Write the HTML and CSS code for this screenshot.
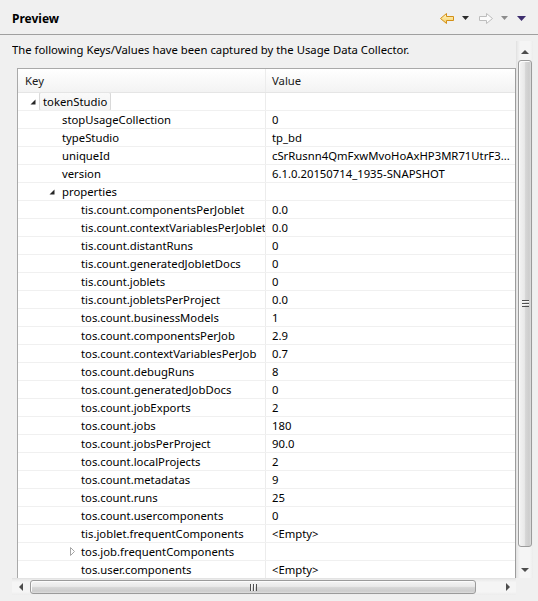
FILE: index.html
```html
<!DOCTYPE html>
<html lang="en">
<head>
    <meta charset="UTF-8">
    <title>Preview</title>
    <link rel="stylesheet" href="styles.css">
</head>
<body>

    <header class="view-header">
        <h2 class="view-title">Preview</h2>
        <div class="view-tools">
            <svg class="tool-arrow" width="16" height="13" viewBox="0 0 16 13">
                <defs>
                    <linearGradient id="backFill" x1="0" y1="0" x2="0" y2="1">
                        <stop offset="0" stop-color="#fff6c8"/>
                        <stop offset="1" stop-color="#f6cf63"/>
                    </linearGradient>
                </defs>
                <path d="M1.5 6.5 L7.5 1.5 L7.5 4.5 L14.5 4.5 L14.5 8.5 L7.5 8.5 L7.5 11.5 Z" fill="url(#backFill)" stroke="#d38f16" stroke-linejoin="round"/>
            </svg>
            <svg class="tool-drop" width="7" height="4" viewBox="0 0 7 4"><path d="M0 0 H7 L3.5 4 Z" fill="#2b2b2b"/></svg>
            <svg class="tool-arrow" width="16" height="13" viewBox="0 0 16 13">
                <path d="M14.5 6.5 L8.5 1.5 L8.5 4.5 L1.5 4.5 L1.5 8.5 L8.5 8.5 L8.5 11.5 Z" fill="#fbfbfb" stroke="#bdbdbd" stroke-linejoin="round"/>
            </svg>
            <svg class="tool-drop" width="7" height="4" viewBox="0 0 7 4"><path d="M0 0 H7 L3.5 4 Z" fill="#8c8c8c"/></svg>
            <svg class="tool-menu" width="9" height="5" viewBox="0 0 9 5"><path d="M0 0 H9 L4.5 5 Z" fill="#3d2d6e"/></svg>
        </div>
    </header>

    <div class="view-body">
        <div class="scroller">
            <div class="scroll-content">
                <p class="intro">The following Keys/Values have been captured by the Usage Data Collector.</p>

                <div class="tree-table">
                    <div class="tree-head">
                        <div class="key">Key</div>
                        <div class="val">Value</div>
                    </div>
                    <div id="tree-rows"></div>
                </div>
            </div>

            <div class="vbar">
                <div class="sb-btn btn-up"><span class="arr arr-up"></span></div>
                <div class="vthumb"><span class="grip"></span></div>
                <div class="sb-fill"></div>
                <div class="sb-btn btn-down"><span class="arr arr-down"></span></div>
            </div>

            <div class="hbar">
                <div class="sb-btn"><span class="arr arr-left"></span></div>
                <div class="hthumb"><span class="grip"></span></div>
                <div class="sb-fill"></div>
                <div class="sb-btn"><span class="arr arr-right"></span></div>
            </div>

            <div class="corner"></div>
        </div>
    </div>

    <script>
        // [level, key, value, twisty]  twisty: 'open' | 'closed' | ''
        const rows = [
            [0, 'tokenStudio', '', 'open'],
            [1, 'stopUsageCollection', '0', ''],
            [1, 'typeStudio', 'tp_bd', ''],
            [1, 'uniqueId', 'cSrRusnn4QmFxwMvoHoAxHP3MR71UtrF3...', ''],
            [1, 'version', '6.1.0.20150714_1935-SNAPSHOT', ''],
            [1, 'properties', '', 'open'],
            [2, 'tis.count.componentsPerJoblet', '0.0', ''],
            [2, 'tis.count.contextVariablesPerJoblet', '0.0', ''],
            [2, 'tis.count.distantRuns', '0', ''],
            [2, 'tis.count.generatedJobletDocs', '0', ''],
            [2, 'tis.count.joblets', '0', ''],
            [2, 'tis.count.jobletsPerProject', '0.0', ''],
            [2, 'tos.count.businessModels', '1', ''],
            [2, 'tos.count.componentsPerJob', '2.9', ''],
            [2, 'tos.count.contextVariablesPerJob', '0.7', ''],
            [2, 'tos.count.debugRuns', '8', ''],
            [2, 'tos.count.generatedJobDocs', '0', ''],
            [2, 'tos.count.jobExports', '2', ''],
            [2, 'tos.count.jobs', '180', ''],
            [2, 'tos.count.jobsPerProject', '90.0', ''],
            [2, 'tos.count.localProjects', '2', ''],
            [2, 'tos.count.metadatas', '9', ''],
            [2, 'tos.count.runs', '25', ''],
            [2, 'tos.count.usercomponents', '0', ''],
            [2, 'tis.joblet.frequentComponents', '<Empty>', ''],
            [2, 'tos.job.frequentComponents', '', 'closed'],
            [2, 'tos.user.components', '<Empty>', '']
        ];

        const openIcon = '<svg width="6" height="6" viewBox="0 0 6 6"><path d="M5.5 0.5 V5.5 H0.5 Z" fill="#262626"/></svg>';
        const closedIcon = '<svg width="5" height="9" viewBox="0 0 5 9"><path d="M0.5 0.5 L4.5 4.5 L0.5 8.5 Z" fill="#fff" stroke="#a6a6a6"/></svg>';

        const list = document.getElementById('tree-rows');
        rows.forEach((r, i) => {
            const row = document.createElement('div');
            row.className = 'tree-row lvl-' + r[0];

            const key = document.createElement('div');
            key.className = 'key';
            const twisty = document.createElement('span');
            twisty.className = 'twisty ' + r[3];
            if (r[3] === 'open') twisty.innerHTML = openIcon;
            if (r[3] === 'closed') twisty.innerHTML = closedIcon;
            const label = document.createElement('span');
            label.className = i === 0 ? 'label focused' : 'label';
            label.textContent = r[1];
            key.appendChild(twisty);
            key.appendChild(label);

            const val = document.createElement('div');
            val.className = 'val';
            val.textContent = r[2];

            row.appendChild(key);
            row.appendChild(val);
            list.appendChild(row);
        });
    </script>

</body>
</html>
```

FILE: styles.css
```css
/* General */
body {
    font-family: "Noto Sans", "Open Sans", sans-serif;
    font-size: 11.3px;
    color: #000;
    background: #f0f0f0;
    margin: 0;
    padding: 0;
}

/* View header */
.view-header {
    display: flex;
    align-items: center;
    height: 34px;
    padding: 0 12px;
    border-bottom: 1px solid #a0a0a0;
}

.view-title {
    margin: 0;
    font-size: 12px;
    font-weight: bold;
    flex: 1;
    padding-top: 3px;
}

.view-tools {
    display: flex;
    align-items: center;
    margin-left: -2px;
    padding-top: 2px;
}

.tool-arrow {
    margin-right: 7px;
}

.tool-drop {
    margin-right: 9px;
}

/* Body */
.view-body {
    padding: 6px 5px 0 12px;
}

.scroller {
    display: grid;
    grid-template-columns: 504px 17px;
    grid-template-rows: 537px 17px;
}

.scroll-content {
    overflow: hidden;
}

.intro {
    margin: 0 0 9px 0;
    line-height: 18px;
}

/* Tree table */
.tree-table {
    margin-left: 5px;
    border: 1px solid #a9a9a9;
    border-right-color: #9c9c9c;
    border-bottom: none;
    background: #fff;
}

.tree-head {
    display: flex;
    height: 23px;
    line-height: 23px;
    background: linear-gradient(#ffffff, #f3f3f3);
    border-bottom: 1px solid #e5e5e5;
    color: #1a1a1a;
}

.tree-head .key {
    padding-left: 7px;
}

.tree-row {
    display: flex;
    height: 17px;
    line-height: 17px;
    border-bottom: 1px solid #f0f0f0;
}

.key {
    box-sizing: border-box;
    width: 248px;
    flex: none;
    border-right: 1px solid #ececec;
    display: flex;
    align-items: center;
    white-space: nowrap;
    overflow: hidden;
}

.val {
    flex: 1;
    padding-left: 6px;
    white-space: nowrap;
    overflow: hidden;
}

.lvl-0 .key { padding-left: 10px; }
.lvl-1 .key { padding-left: 29px; }
.lvl-2 .key { padding-left: 48px; }

.twisty {
    width: 11px;
    height: 17px;
    flex: none;
    display: flex;
    align-items: center;
}

.twisty.open {
    padding-left: 2px;
    width: 9px;
}

.twisty.closed {
    padding-left: 4px;
    width: 7px;
}

.twisty svg {
    display: block;
}

.label {
    padding: 0 3px;
    border: 1px solid transparent;
    line-height: 17px;
}

.label.focused {
    border-color: #d9d9d9;
    border-radius: 2px;
    background: linear-gradient(#fafafa, #f2f2f2);
}

/* Scrollbars */
.vbar {
    display: flex;
    flex-direction: column;
    background: linear-gradient(to right, #e8e8e8, #f5f5f5 20%, #f5f5f5 80%, #ececec);
    border-left: 1px solid #e3e3e3;
    box-sizing: border-box;
}

.hbar {
    display: flex;
    background: linear-gradient(#e8e8e8, #f5f5f5 20%, #f5f5f5 80%, #ececec);
    border-top: 1px solid #e3e3e3;
}

.corner {
    background: #f0f0f0;
}

.sb-btn {
    flex: none;
    display: flex;
    align-items: center;
    justify-content: center;
}

.btn-up {
    height: 19px;
}

.btn-down {
    height: 20px;
}

.hbar .sb-btn {
    width: 17px;
}

.sb-fill {
    flex: 1;
}

.arr {
    width: 0;
    height: 0;
    border: 4px solid transparent;
}

.arr-up {
    border-bottom: 4px solid #4d4d4d;
    border-top-width: 0;
    margin-top: 2px;
}

.arr-down {
    border-top: 4px solid #4d4d4d;
    border-bottom-width: 0;
    margin-top: 4px;
}

.arr-left {
    border-right: 4px solid #4d4d4d;
    border-left-width: 0;
}

.arr-right {
    border-left: 4px solid #4d4d4d;
    border-right-width: 0;
}

.vthumb {
    height: 485px;
    margin: 0 1px;
    border: 1px solid #9b9b9b;
    border-radius: 3px;
    background: linear-gradient(to right, #f4f4f4, #e9e9e9 45%, #d6d6d6 55%, #cdcdcd 85%, #dedede);
    box-shadow: inset 1px 1px 0 #fbfbfb;
    display: flex;
    align-items: center;
    justify-content: center;
}

.hthumb {
    width: 444px;
    margin: 1px 0 1px 1px;
    border: 1px solid #9b9b9b;
    border-radius: 3px;
    background: linear-gradient(#f4f4f4, #e9e9e9 45%, #d6d6d6 55%, #cdcdcd 85%, #dedede);
    box-shadow: inset 1px 1px 0 #fbfbfb;
    display: flex;
    align-items: center;
    justify-content: center;
}

.vthumb .grip {
    width: 7px;
    height: 7px;
    background: repeating-linear-gradient(#4f4f4f 0 1px, #f6f6f6 1px 2px, transparent 2px 3px);
}

.hthumb .grip {
    width: 7px;
    height: 7px;
    background: repeating-linear-gradient(to right, #4f4f4f 0 1px, #f6f6f6 1px 2px, transparent 2px 3px);
}
```
